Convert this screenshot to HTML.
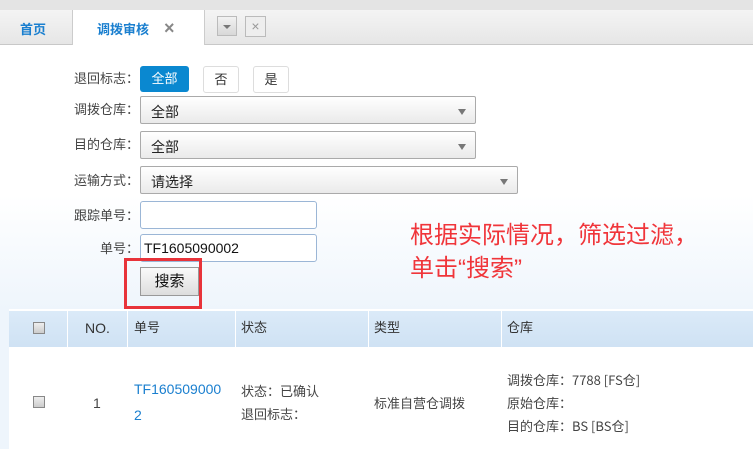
<!DOCTYPE html>
<html><head><meta charset="utf-8"><style>
body{margin:0;width:753px;height:449px;overflow:hidden;font-family:"Liberation Sans","Noto Sans CJK SC",sans-serif;font-size:13px;color:#444;background:#eef5fc;position:relative}
.a{position:absolute}
.lbl{position:absolute;right:614px;font-size:13px;color:#444;white-space:nowrap;font-family:"Noto Sans CJK SC",sans-serif;line-height:18px}
.sel{position:absolute;left:140px;height:28px;border:1px solid #aaa;border-radius:2px;background:linear-gradient(#fff,#eaeaea);box-sizing:border-box;font-size:14px;color:#222;padding:7px 10px;line-height:16px}
.sel:after{content:"";position:absolute;right:9px;top:12px;border:4px solid transparent;border-top:6px solid #777;}
.inp{position:absolute;left:140px;width:177px;height:28px;border:1px solid #9bb6d6;border-radius:3px;background:#fff;box-sizing:border-box;font-size:14px;color:#111;padding:5px 3px}
.cb{position:absolute;width:10px;height:10px;border:1px solid #888;background:linear-gradient(#eee,#ccc)}
.h{position:absolute;top:319px;color:#333;line-height:18px}
</style></head><body>
<div class="a" style="left:0;top:0;width:753px;height:10px;background:#e4e4e4;border-bottom:1px solid #ccc"></div>
<div class="a" style="left:0;top:10px;width:753px;height:34px;background:linear-gradient(#f4f4f4,#e6e6e6);border-bottom:1px solid #c8c8c8"></div>
<div class="a" style="left:20px;top:19px;color:#1a7fcf;font-weight:bold;font-size:13px">首页</div>
<div class="a" style="left:72px;top:10px;width:131px;height:35px;background:#fff;border-left:1px solid #ccc;border-right:1px solid #ccc"></div>
<div class="a" style="left:97px;top:19px;color:#1a7fcf;font-weight:bold;font-size:13px">调拨审核</div>
<div class="a" style="left:164px;top:18px;color:#888;font-size:18px;font-weight:bold">×</div>
<div class="a" style="left:217px;top:16px;width:20px;height:20px;border:1px solid #bbb;background:linear-gradient(#f2f2f2,#d8d8d8);box-sizing:border-box"><div style="margin:8px 0 0 5px;border:4px solid transparent;border-top:4px solid #777;width:0"></div></div>
<div class="a" style="left:245px;top:16px;width:21px;height:21px;border:1px solid #bbb;background:#eee;box-sizing:border-box;color:#999;font-size:14px;line-height:18px;text-align:center">×</div>
<div class="a" style="left:0;top:45px;width:753px;height:265px;background:linear-gradient(#fff 0,#fff 150px,#eef5fc 265px)"></div>

<div class="lbl" style="top:69px">退回标志：</div>
<div class="a" style="left:140px;top:66px;width:49px;height:26px;background:#0a88d0;border-radius:3px;color:#fff;font-size:13px;text-align:center;line-height:26px">全部</div>
<div class="a" style="left:203px;top:66px;width:34px;height:25px;border:1px solid #ddd;border-radius:3px;background:#fff;text-align:center;line-height:25px;color:#333">否</div>
<div class="a" style="left:253px;top:66px;width:34px;height:25px;border:1px solid #ddd;border-radius:3px;background:#fff;text-align:center;line-height:25px;color:#333">是</div>
<div class="lbl" style="top:100px">调拨仓库：</div>
<div class="sel" style="top:96px;width:336px">全部</div>
<div class="lbl" style="top:135px">目的仓库：</div>
<div class="sel" style="top:131px;width:336px">全部</div>
<div class="lbl" style="top:171px">运输方式：</div>
<div class="sel" style="top:166px;width:378px">请选择</div>
<div class="lbl" style="top:206px">跟踪单号：</div>
<div class="inp" style="top:201px"></div>
<div class="lbl" style="top:239px">单号：</div>
<div class="inp" style="top:234px">TF1605090002</div>
<div class="a" style="left:140px;top:267px;width:59px;height:29px;border:1px solid #999;background:linear-gradient(#fafafa,#ddd);box-sizing:border-box;text-align:center;line-height:27px;font-size:15px;color:#111">搜索</div>
<div class="a" style="left:124px;top:258px;width:78px;height:51px;border:3px solid #e8333a;box-sizing:border-box"></div>
<div class="a" style="left:410px;top:219px;color:#f0353a;font-size:24px;line-height:33px;white-space:nowrap">根据实际情况，筛选过滤，<br>单击“搜索”</div>

<div class="a" style="left:9px;top:309px;width:744px;height:140px;background:#fff"></div>
<div class="a" style="left:9px;top:311px;width:744px;height:36px;background:linear-gradient(#dbeaf8,#cfe2f4)"></div>
<div class="a" style="left:67px;top:311px;width:1px;height:36px;background:#fff"></div>
<div class="a" style="left:127px;top:311px;width:1px;height:36px;background:#fff"></div>
<div class="a" style="left:235px;top:311px;width:1px;height:36px;background:#fff"></div>
<div class="a" style="left:368px;top:311px;width:1px;height:36px;background:#fff"></div>
<div class="a" style="left:501px;top:311px;width:1px;height:36px;background:#fff"></div>
<div class="cb" style="left:33px;top:322px"></div>
<div class="h" style="left:85px;font-size:14px">NO.</div>
<div class="h" style="left:134px">单号</div>
<div class="h" style="left:241px">状态</div>
<div class="h" style="left:374px">类型</div>
<div class="h" style="left:507px">仓库</div>
<div class="cb" style="left:33px;top:396px"></div>
<div class="a" style="left:93px;top:395px;color:#444;font-size:14px">1</div>
<div class="a" style="left:134px;top:376px;color:#1a7fcf;font-size:14px;line-height:26px">TF160509000<br>2</div>
<div class="a" style="left:241px;top:379px;line-height:23px;font-family:'Noto Sans CJK SC',sans-serif">状态：已确认<br>退回标志：</div>
<div class="a" style="left:374px;top:393px">标准自营仓调拨</div>
<div class="a" style="left:507px;top:368px;line-height:23px;font-family:'Noto Sans CJK SC',sans-serif">调拨仓库：7788 [FS仓]<br>原始仓库：<br>目的仓库：BS [BS仓]</div>
</body></html>
